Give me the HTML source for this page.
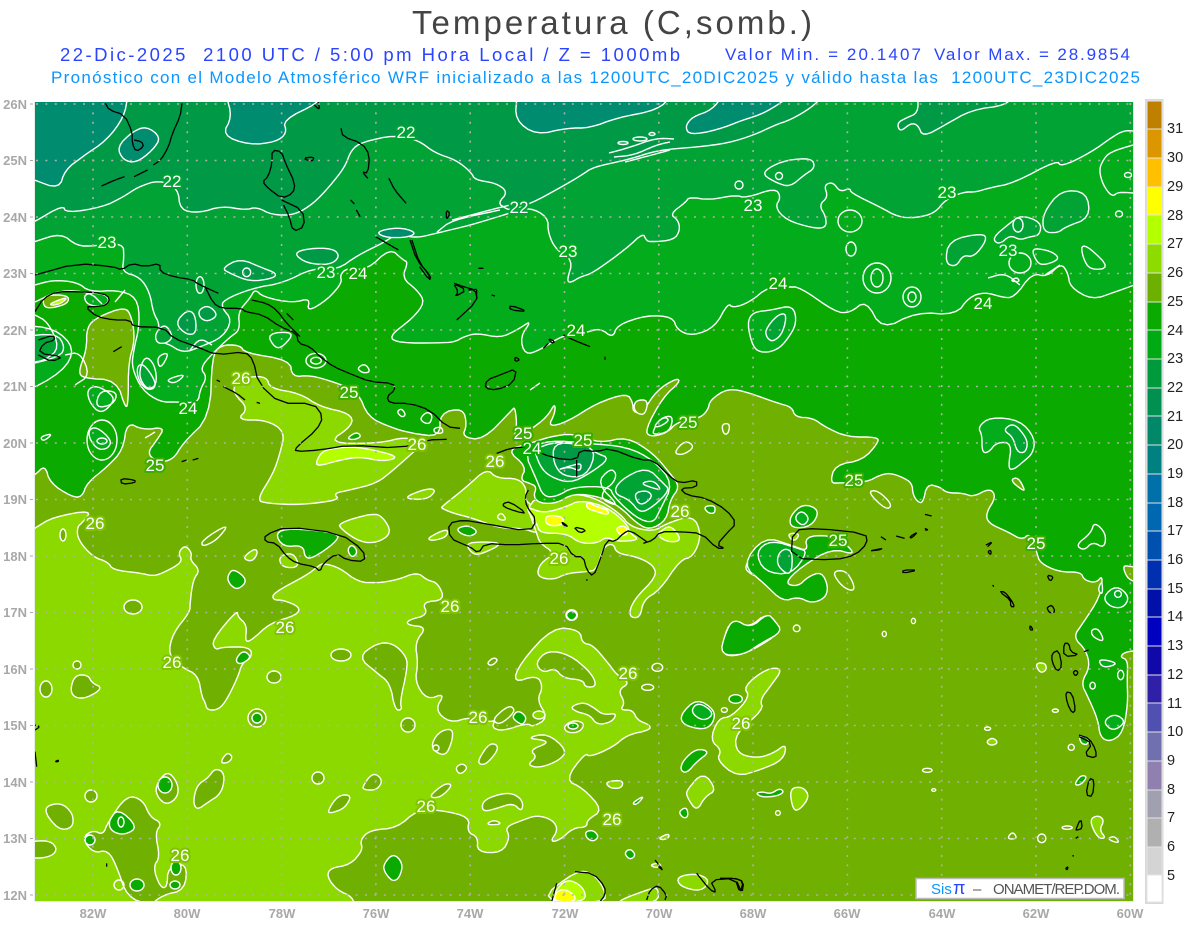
<!DOCTYPE html>
<html><head><meta charset="utf-8"><title>Temperatura</title>
<style>
html,body{margin:0;padding:0;background:#fff;width:1200px;height:927px;overflow:hidden}
svg{display:block}
text{font-family:"Liberation Sans",sans-serif}
.f path,.f polygon,.f ellipse{stroke:#fff;stroke-width:1.4;stroke-linejoin:round;vector-effect:non-scaling-stroke}
.b20{fill:#008c6e}.b21{fill:#009a46}.b22{fill:#00a334}.b23{fill:#02ac1a}.b24{fill:#0aaa00}.b25{fill:#6fb000}.b26{fill:#8cd900}.b27{fill:#b4ff00}.b28{fill:#ffff00}
.n{fill:none}
.w{fill:none;stroke:#fff;stroke-width:1.4;stroke-linejoin:round;vector-effect:non-scaling-stroke}
.k{fill:none;stroke:#000;stroke-width:1.3;stroke-linejoin:round;vector-effect:non-scaling-stroke}
.cl text{fill:#fff;font-size:17px;text-anchor:middle;paint-order:stroke;stroke-width:4px;stroke-linejoin:round}
.ax{fill:#a8a8a8;font-size:13px;font-weight:bold}
.lg{fill:#222;font-size:14.5px}
</style></head><body>
<svg width="1200" height="927" viewBox="0 0 1200 927" xmlns="http://www.w3.org/2000/svg">
<defs><clipPath id="c"><rect x="35" y="102" width="1098" height="799"/></clipPath></defs>
<rect width="1200" height="927" fill="#fff"/>

<text x="412" y="34" font-size="33" fill="#444" textLength="400" lengthAdjust="spacing">Temperatura (C,somb.)</text>
<text x="60" y="61" font-size="18.5" fill="#2a44ff" textLength="620" lengthAdjust="spacing" xml:space="preserve">22-Dic-2025  2100 UTC / 5:00 pm Hora Local / Z = 1000mb</text>
<text x="725" y="60" font-size="17" fill="#2a44ff" textLength="196" lengthAdjust="spacing">Valor Min. = 20.1407</text>
<text x="934" y="60" font-size="17" fill="#2a44ff" textLength="196" lengthAdjust="spacing">Valor Max. = 28.9854</text>
<text x="51" y="83" font-size="17" fill="#0a96ff" textLength="1089" lengthAdjust="spacing" xml:space="preserve">Pronóstico con el Modelo Atmosférico WRF inicializado a las 1200UTC_20DIC2025 y válido hasta las  1200UTC_23DIC2025</text>

<g clip-path="url(#c)">
<rect x="35" y="102" width="1098" height="799" fill="#009a46"/>
<g class="f">
<!-- teal top -->
<polygon class="b20" points="25,95 128,95 124,117 107,140 82,157 65,170 59,189 34,180 25,176"/>
<polygon class="b20" points="117,147 132,132 146,126 161,137 153,150 136,163 123,160"/>
<polygon class="b20" points="226,95 232,117 222,135 249,145 276,142 287,133 283,120 318,103 320,95"/>
<polygon class="b20" points="517,95 515,120 536,135 567,128 590,128 616,118 658,110 672,95"/>
<polygon class="b20" points="723,95 712,110 692,117 685,127 690,135 717,130 743,120 765,113 792,95"/>
<!-- 22 and up -->
<polygon class="b22" points="25,226 34,222 63,205 66,213 103,207 123,197 138,187 159,180 178,188 180,210 199,213 222,206 245,210 257,207 272,215 295,215 314,203 329,187 345,167 351,150 362,142 395,135 418,140 435,153 456,160 471,172 475,180 496,183 508,192 498,203 505,208 510,210 532,203 556,190 582,175 593,167 627,160 658,150 698,147 728,143 754,135 775,125 790,120 811,108 824,95 1140,90 1140,910 25,910"/>
<polygon class="b21" points="897,123 900,132 911,123 918,125 923,137 945,125 971,110 1007,105 1012,95 918,95 918,113 906,118"/>
<polygon class="b23" points="25,244 34,242 61,233 77,246 94,246 123,243 124,257 122,272 140,277 150,293 153,312 160,325 157,343 167,343 183,353 200,347 223,337 232,320 222,308 223,300 253,288 283,283 313,268 337,270 358,255 383,243 398,233 410,237 421,237 437,233 471,225 510,213 529,207 548,217 548,233 556,250 573,260 567,280 570,283 580,277 593,273 627,248 643,233 646,240 650,242 674,240 680,230 678,220 670,214 686,202 689,197 710,200 735,195 746,198 775,188 781,197 775,207 786,220 812,228 826,228 826,217 819,205 828,197 824,185 833,182 840,192 850,188 851,193 880,207 898,217 916,218 935,213 945,200 963,192 976,192 989,188 1014,183 1057,160 1061,167 1090,153 1115,135 1126,130 1140,132 1140,910 25,910"/>
<polygon class="b22" points="763,175 768,168 786,160 812,158 815,168 804,175 790,187 777,183"/>
<polygon class="b22" points="1043,213 1061,190 1087,192 1090,218 1065,227 1058,233 1043,232"/>
<polygon class="b22" points="945,263 949,240 983,233 987,240 974,257 963,255 956,267"/>
<polygon class="b22" points="992,238 1010,223 1021,215 1041,222 1040,235 1029,237 1020,240 1010,235 999,245"/>
<polygon class="b20" points="375,232 398,227 416,232 410,237 387,238"/>
<!-- 24 zone -->
<polygon class="b24" points="25,287 35,285 53,280 77,282 90,292 117,290 137,297 140,323 133,353 132,368 142,390 160,402 177,402 198,403 200,390 207,377 200,368 213,353 230,337 240,330 238,312 250,298 255,289 263,297 293,303 310,298 307,312 327,300 342,283 340,275 347,268 367,270 390,248 403,260 408,262 402,278 417,290 425,302 413,318 388,337 400,343 438,343 455,342 463,337 477,333 500,338 517,330 532,320 520,337 525,355 540,350 563,335 585,333 600,328 613,338 617,325 647,315 673,317 677,330 693,336 715,327 728,303 733,308 750,302 768,287 788,287 800,287 835,312 850,313 866,300 882,330 916,312 956,315 969,297 985,292 1001,297 1014,298 1032,273 1047,277 1061,263 1068,273 1070,287 1092,300 1115,292 1140,283 1140,910 25,910"/>
<polygon class="b23" points="747,323 753,312 772,310 793,305 797,323 787,340 777,350 763,353 753,348"/>
<polygon class="b22" points="765,330 777,315 787,313 783,333 773,342 767,338"/>
<polygon class="b23" points="978,427 990,417 1020,420 1035,438 1033,453 1023,462 1013,470 1008,468 1012,443 997,442 988,453 982,452 982,435"/>
<polygon class="b22" points="1003,430 1013,423 1023,433 1028,443 1025,453 1017,452 1013,437"/>
<polygon class="b25" points="1010,480 1018,477 1025,490 1022,490"/>
<!-- 25 zone -->
<polygon class="b25" points="25,480 35,475 45,465 50,483 72,497 82,497 87,483 107,467 123,450 127,422 143,430 165,427 157,440 147,453 157,462 173,460 183,443 210,417 212,357 220,345 240,345 245,353 290,360 292,377 310,375 337,383 358,392 368,417 390,427 410,433 440,437 440,413 463,408 467,425 462,437 483,440 512,410 515,407 517,427 513,440 523,433 530,430 547,417 555,403 555,413 548,427 567,422 597,403 627,393 633,403 633,412 642,413 657,390 677,378 680,382 663,397 645,430 650,437 667,433 677,422 700,418 708,410 710,400 728,388 750,393 777,403 792,407 795,417 813,418 825,427 847,437 878,437 878,443 863,460 835,465 830,483 840,483 867,482 880,475 890,473 902,477 912,483 913,495 918,502 923,503 927,484 940,487 947,493 963,493 973,497 990,488 996,497 986,513 988,523 1008,532 1022,540 1030,533 1037,553 1040,563 1059,572 1081,572 1084,580 1096,583 1103,575 1100,597 1083,623 1073,637 1086,650 1090,667 1081,683 1088,697 1098,720 1100,737 1110,742 1123,733 1128,703 1127,680 1128,660 1120,657 1125,652 1140,650 1140,910 25,910"/>
<polygon class="b25" points="1122,565 1133,567 1140,567 1140,582 1128,580"/>
<!-- West Cuba olive + blobs (zoom 6 coords) -->
<g transform="translate(0 240) scale(.33333)">
<polygon class="b25" points="375,200 395,230 405,300 385,370 385,480 378,510 350,420 250,415 235,395 260,330 260,260 295,230"/>
<polygon class="b23" points="260,450 290,435 345,470 330,500 300,520 270,490"/>
<polygon class="b23" points="265,570 290,560 335,600 325,625 295,630 270,600"/>
<polygon class="b22" points="410,380 430,370 465,420 465,445 440,450 415,420"/>
<polygon class="b23" points="495,420 560,400 525,432"/>
<polygon class="b23" points="800,280 885,275 850,320 825,325"/>
<polygon class="b23" points="120,590 160,580 130,605"/>
<polygon class="b23" points="60,255 165,265 225,325 190,395 60,465"/>
<polygon class="b22" points="60,290 170,280 195,320 180,350 60,380"/>
<polygon class="b23" points="250,160 310,160 330,180 310,200 260,195"/>
<polygon class="b21" points="525,250 560,210 585,220 590,280 560,285"/>
<polygon class="b21" points="595,210 625,195 655,225 625,245 600,235"/>
<polygon class="b21" points="665,85 720,55 790,85 830,100 820,115 750,125 690,100"/>
<polygon class="b21" points="880,40 925,25 1000,25 1020,50 990,75 920,70"/>
<polygon class="b25" points="130,165 205,165 205,190 155,205 130,200"/>
<polygon class="b27" points="150,190 205,170 185,190 155,197"/>
<polygon class="b22" points="470,310 465,280 495,250 520,290 500,310"/>
<ellipse class="n" cx="600" cy="135" rx="12" ry="25"/>
<polygon class="n" points="470,350 510,335 480,390"/>
<ellipse class="n" cx="740" cy="97" rx="12" ry="13"/>
<ellipse class="n" cx="948" cy="362" rx="30" ry="22"/>
<ellipse class="n" cx="948" cy="362" rx="16" ry="10"/>
<polygon class="n" points="1070,385 1095,370 1112,395 1090,400"/>
<polygon class="n" points="1190,515 1205,505 1218,525 1205,532"/>
<polygon class="n" points="1260,535 1280,515 1298,525 1290,552 1270,548"/>
<polygon class="n" points="1300,565 1325,560 1330,580 1305,580"/>
</g>
<!-- 26 zone -->
<polygon class="b26" points="25,535 35,528 53,517 92,510 83,522 77,527 78,540 93,557 108,562 113,570 140,573 153,576 163,573 183,562 178,553 185,545 192,553 190,560 200,570 193,580 190,603 190,612 173,633 168,655 183,668 198,675 202,697 205,702 207,710 217,710 225,703 238,677 242,663 252,657 250,647 223,647 215,650 212,640 237,610 238,617 247,625 245,642 252,640 270,623 297,615 300,607 283,600 273,600 273,593 307,575 317,567 323,563 340,568 358,582 377,583 397,580 417,572 427,580 438,583 445,600 422,602 428,615 408,620 407,625 427,627 415,642 418,663 415,682 427,700 445,693 435,710 450,723 470,717 490,722 495,720 492,728 503,731 527,723 533,727 548,718 537,700 543,687 537,675 513,683 520,663 553,627 580,630 582,643 593,645 608,663 617,675 630,683 618,690 625,703 620,710 633,710 637,720 650,725 650,730 627,735 613,747 590,757 585,753 565,780 583,788 603,810 587,820 587,827 573,828 560,840 550,842 558,830 553,820 537,815 523,820 505,827 510,837 502,853 477,852 478,837 467,832 470,817 440,810 417,810 397,828 370,830 360,840 363,850 350,865 330,868 327,877 337,890 353,897 355,910 25,910"/>
<!-- olive holes -->
<polygon class="b25" points="535,663 548,650 570,655 588,670 595,680 595,687 585,687 583,680 563,678 555,668 543,673"/>
<polygon class="b25" points="570,707 583,702 593,707 603,715 617,713 612,722 597,725 590,715 577,712"/>
<polygon class="b25" points="527,738 547,733 567,750 560,760 540,768 527,765 537,757 530,750 548,743 543,740"/>
<polygon class="b25" points="482,803 490,797 510,792 523,800 522,812 513,803 498,808 483,812"/>
<polygon class="b25" points="478,760 490,742 500,747 488,763 480,765"/>
<polygon class="b25" points="455,768 462,763 468,768 460,775"/>
<polygon class="b25" points="430,748 438,732 453,728 452,742 445,757"/>
<polygon class="b25" points="428,797 445,783 453,785 440,798"/>
<polygon class="b25" points="487,823 495,820 502,824 490,825"/>
<polygon class="b25" points="563,727 573,720 585,723 580,732 568,733"/>
<ellipse class="b24" cx="573" cy="726" rx="5" ry="3"/>
<polygon class="b25" points="492,720 505,708 512,706 515,712 500,725"/>
<polygon class="b24" points="512,717 518,710 527,717 523,725 517,722"/>
<ellipse class="b26" cx="539" cy="715" rx="6" ry="4"/>
<ellipse class="b25" cx="63" cy="535" rx="3" ry="6"/>
<polygon class="b25" points="202,540 230,523 217,540 202,547"/>
<ellipse class="b25" cx="133" cy="607" rx="9" ry="7"/>
<ellipse class="b25" cx="77" cy="665" rx="4" ry="4"/>
<ellipse class="b25" cx="46" cy="689" rx="6" ry="8"/>
<polygon class="b25" points="70,690 75,675 88,675 92,683 103,688 87,698 75,698"/>
<polygon class="b25" points="220,763 227,752 233,757 228,763"/>
<polygon class="b25" points="193,802 197,785 208,778 215,768 225,773 222,793 207,803 197,810"/>
<polygon class="b25" points="155,787 167,770 178,783 178,797 167,805 158,798"/>
<ellipse class="b24" cx="165" cy="785" rx="7" ry="8"/>
<polygon class="b25" points="42,808 60,802 73,813 73,828 58,830"/>
<polygon class="b25" points="25,842 50,840 58,850 48,858 25,858"/>
<ellipse class="b25" cx="91" cy="796" rx="6" ry="6"/>
<polygon class="b25" points="108,822 127,795 143,800 150,817 162,823 155,833 160,857 153,867 160,887 167,888 168,867 187,863 185,890 163,895 150,905 127,897 117,867 108,850 93,853 82,838 93,830 103,835"/>
<polygon class="b24" points="108,822 118,808 138,827 125,835 112,832"/>
<ellipse class="n" cx="121" cy="822" rx="3" ry="5"/>
<ellipse class="b24" cx="90" cy="840" rx="5" ry="5"/>
<ellipse class="b24" cx="137" cy="885" rx="7" ry="6"/>
<ellipse class="n" cx="119" cy="885" rx="5" ry="5"/>
<ellipse class="b24" cx="176" cy="868" rx="5" ry="7"/>
<ellipse class="b24" cx="175" cy="885" rx="5" ry="4"/>
<polygon class="b25" points="362,787 373,772 383,780 377,790 365,790"/>
<polygon class="b25" points="327,812 338,795 352,795 345,808 332,813"/>
<ellipse class="b25" cx="318" cy="778" rx="6" ry="6"/>
<polygon class="b25" points="358,657 377,643 393,643 407,657 407,670 400,702 402,710 395,710 390,683 377,673"/>
<ellipse class="b25" cx="341" cy="655" rx="10" ry="6"/>
<ellipse class="b25" cx="408" cy="725" rx="7" ry="7"/>
<polygon class="b24" points="227,577 233,568 248,580 238,590 230,585"/>
<polygon class="b24" points="235,660 243,650 252,657 240,665"/>
<ellipse class="b25" cx="257" cy="718" rx="9" ry="9"/>
<ellipse class="b24" cx="257" cy="718" rx="5" ry="5"/>
<ellipse class="b25" cx="274" cy="677" rx="7" ry="6"/>
<ellipse class="b25" cx="436" cy="748" rx="3" ry="3"/>
<polygon class="b24" points="383,865 393,853 403,863 400,877 393,882 385,873"/>
<!-- light in olive -->
<polygon class="b26" points="338,523 373,513 383,517 392,533 377,543 360,542 342,530"/>
<polygon class="b26" points="242,558 255,548 258,553 252,562"/>
<polygon class="b24" points="275,533 290,528 340,533 335,543 313,558 305,558 303,545 283,547"/>
<polygon class="b26" points="278,557 293,552 300,567 283,568"/>
<polygon class="b24" points="347,550 352,544 358,552 352,558"/>
<polygon class="b26" points="427,538 448,528 447,537 432,541"/>
<!-- East Cuba light (zoom 6 coords) -->
<g transform="translate(0 240) scale(.33333)">
<polygon class="b26" points="705,430 745,410 800,410 810,445 900,460 960,500 1050,520 1060,555 980,610 1140,610 1215,590 1270,610 1225,650 1180,690 1130,730 1050,750 1000,760 1020,780 900,795 800,790 770,780 820,700 840,640 855,575 800,540 710,540 745,505 700,460"/>
<polygon class="b27" points="950,660 970,630 1040,620 1100,625 1200,650 1150,665 1080,650 1020,660 950,680"/>
<polygon class="b26" points="1205,775 1280,745 1310,750 1280,780"/>
<polygon class="b24" points="1040,595 1070,575 1085,590 1060,600"/>
</g>
<!-- Hispaniola (zoom 4 coords) -->
<g transform="translate(440 400) scale(.33333)">
<polygon class="b26" points="5,320 75,265 140,205 170,235 235,235 260,265 255,300 275,315 260,330 285,360 300,375 285,385 290,400 250,385 180,385 100,355 40,340 5,325"/>
<polygon class="b26" points="255,300 380,280 460,290 540,340 570,380 640,395 680,370 760,345 785,405 760,470 720,480 660,570 610,600 600,655 565,650 580,600 650,530 640,495 590,470 530,460 520,430 490,440 470,510 440,515 380,520 340,540 290,530 300,490 345,460 300,430 290,400"/>
<polygon class="b26" points="75,430 130,425 190,430 130,460 100,465"/>
<polygon class="b27" points="260,320 310,340 380,320 420,300 500,320 560,370 570,400 600,420 530,425 500,410 470,430 420,430 380,400 300,400 290,370 270,345"/>
<polygon class="b27" points="660,395 690,375 720,410 715,425 680,425 650,405"/>
<polygon class="b28" points="320,345 370,350 370,375 330,378 315,365"/>
<polygon class="b28" points="440,305 470,320 505,330 505,345 470,335 440,325"/>
<polygon class="b28" points="525,385 555,375 565,400 545,410"/>
<polygon class="b24" points="240,240 260,200 200,150 270,130 330,110 400,100 480,130 560,110 640,160 690,220 720,260 690,300 680,360 630,390 590,370 540,320 480,290 400,280 350,310 300,310 280,290 290,260 270,250"/>
<polygon class="b23" points="250,150 330,120 440,130 560,140 640,180 700,250 660,330 640,370 590,355 520,290 510,260 400,260 350,290 310,290 290,240"/>
<polygon class="b22" points="280,140 400,120 470,160 510,175 450,220 390,250 330,230 300,200"/>
<polygon class="b22" points="540,240 620,200 670,250 690,270 640,320 600,340 570,300 520,280"/>
<polygon class="b21" points="340,130 410,130 470,150 440,230 370,230 340,190"/>
<polygon class="b21" points="580,280 620,270 640,290 600,320"/>
<polygon class="n" points="350,210 400,195 425,190 420,215 390,200"/>
<polygon class="n" points="470,250 510,205 530,220 520,250 490,270 485,300 540,320"/>
<polygon class="n" points="600,250 640,240 665,270 640,265"/>
<polygon class="b24" points="50,385 85,375 115,395 90,410 60,400"/>
<polygon class="b24" points="790,320 825,315 825,340 805,340"/>
<polygon class="b24" points="910,500 960,440 960,530 935,525"/>
<ellipse class="b24" cx="395" cy="645" rx="17" ry="16"/>
<polygon class="b26" points="170,350 185,337 200,360 180,360"/>
<polygon class="b25" points="580,20 590,0 625,0 615,45 590,40"/>
<polygon class="b24" points="640,90 660,55 700,45 690,95 640,105"/>
<polygon class="b23" points="640,80 670,50 690,60 660,80"/>
<polygon class="b25" points="700,160 735,120 765,140 730,165"/>
<polygon class="n" points="845,72 870,70 865,102 850,102"/>
</g>
<!-- SE patches (zoom 9 coords) -->
<g transform="translate(420 600) scale(.33333)">
<polygon class="b26" points="870,420 895,355 935,350 990,290 970,260 1040,205 1090,205 1050,260 1020,300 1030,330 945,400 950,460 1010,475 1060,460 1100,430 1090,480 1020,510 950,530 890,480 905,450"/>
<polygon class="b24" points="780,345 830,295 885,330 880,370 850,390 790,375"/>
<polygon class="b23" points="810,335 835,305 885,340 850,365"/>
<polygon class="b24" points="905,160 925,60 985,85 1045,35 1085,95 1000,150 940,170"/>
<polygon class="b24" points="780,510 790,480 830,445 870,455 830,485 800,520"/>
<polygon class="b26" points="800,570 850,515 890,570 855,590 830,635 800,590"/>
<polygon class="b24" points="775,635 800,620 805,650 790,655"/>
<polygon class="b24" points="635,610 675,585 650,615"/>
<polygon class="b24" points="612,760 630,745 648,765 630,780"/>
<polygon class="b26" points="555,545 610,540 605,565 570,565"/>
<polygon class="b26" points="715,715 745,700 748,712 730,720"/>
<polygon class="b26" points="770,830 830,820 870,840 845,875 780,860"/>
<polygon class="b26" points="690,795 715,788 725,800 705,803"/>
<polygon class="b26" points="600,900 680,870 715,860 715,910 600,910"/>
<polygon class="b26" points="350,905 470,810 520,820 555,870 555,910"/>
<polygon class="b27" points="400,880 440,835 490,860 500,905 400,905"/>
<polygon class="b28" points="405,905 405,880 430,865 465,885 465,905"/>
<polygon class="b24" points="495,695 520,690 537,710 520,725 500,715"/>
<polygon class="b24" points="435,45 455,28 475,45 455,65"/>
<polygon class="n" points="200,190 220,172 235,180 215,198"/>
<ellipse class="n" cx="712" cy="202" rx="16" ry="12"/>
<ellipse class="n" cx="683" cy="262" rx="18" ry="9"/>
<ellipse class="b24" cx="947" cy="297" rx="20" ry="13"/>
<ellipse class="n" cx="913" cy="330" rx="9" ry="7"/>
<ellipse class="n" cx="1130" cy="85" rx="10" ry="10"/>
</g>
<!-- E Antilles (zoom 10 coords) -->
<g transform="translate(720 480) scale(.33871 .33333)">
<polygon class="b24" points="65,255 130,170 210,195 260,215 250,170 320,165 370,190 400,225 330,205 240,260 190,310 230,320 260,290 300,275 320,320 310,355 270,370 230,350 185,365 130,310"/>
<polygon class="b23" points="105,215 150,180 230,205 260,215 210,285 130,275"/>
<polygon class="b22" points="170,225 190,205 215,215 210,290 170,260"/>
<polygon class="b24" points="205,110 245,70 295,90 270,140 210,145"/>
<polygon class="b23" points="218,115 240,90 265,115 245,140"/>
<polygon class="b25" points="330,275 370,270 395,310 395,335 360,320"/>
<polygon class="b26" points="200,160 235,160 225,180 210,180"/>
<polygon class="b24" points="0,525 15,460 40,415 90,445 140,400 160,420 185,455 120,490 70,525"/>
<polygon class="b23" points="1130,350 1170,315 1210,350 1190,385 1150,380"/>
<ellipse class="n" cx="1175" cy="342" rx="10" ry="10"/>
<polygon class="b23" points="1130,725 1165,700 1200,725 1160,755"/>
<polygon class="b23" points="1115,535 1180,550 1130,565"/>
<polygon class="n" points="1095,450 1115,445 1130,470 1130,485 1100,470"/>
<ellipse class="n" cx="1183" cy="585" rx="9" ry="14"/>
<ellipse class="n" cx="1100" cy="617" rx="8" ry="10"/>
<polygon class="b26" points="1090,1020 1115,1005 1135,1020 1120,1050 1140,1075 1115,1075"/>
<polygon class="b26" points="205,925 245,920 265,950 235,990 215,990"/>
<polygon class="b24" points="105,940 125,935 150,942 175,925 190,935 170,948 125,952"/>
<polygon class="n" points="1050,195 1095,160 1105,125 1140,160 1135,205 1100,185 1075,212"/>
<polygon class="n" points="435,35 465,30 510,75 490,90"/>
<ellipse class="n" cx="485" cy="462" rx="6" ry="8"/>
<ellipse class="n" cx="571" cy="423" rx="6" ry="8"/>
<polygon class="b26" points="930,550 960,548 965,570 945,580"/>
<polygon class="b24" points="1045,915 1065,885 1085,890 1065,915"/>
<polygon class="b24" points="1060,765 1090,775 1085,795 1065,790"/>
<polygon class="b26" points="785,785 805,772 822,788 800,798"/>
<ellipse class="n" cx="1037" cy="802" rx="9" ry="9"/>
<ellipse class="n" cx="790" cy="746" rx="9" ry="5"/>
<ellipse class="n" cx="990" cy="692" rx="9" ry="5"/>
<ellipse class="n" cx="612" cy="871" rx="14" ry="6"/>
<ellipse class="n" cx="631" cy="930" rx="6" ry="4"/>
<ellipse class="n" cx="171" cy="999" rx="7" ry="7"/>
<ellipse class="n" cx="950" cy="1075" rx="12" ry="13"/>
<polygon class="n" points="850,1070 865,1055 878,1075 855,1078"/>
<ellipse class="n" cx="1025" cy="1043" rx="15" ry="5"/>
<polygon class="n" points="1145,1075 1165,1068 1180,1088 1160,1085"/>
<polygon class="b23" points="1115,330 1128,300 1130,345"/>
</g>
<!-- extra contour lines -->
<g class="w" fill="none">
<path class="n" d="M609,153 631,147 656,138 674,139M614,157 634,155 656,145 670,142M625,162 652,155 670,150M452,220 490,210 510,205M437,232 452,220 500,210"/>
<ellipse class="n" cx="623" cy="143" rx="5" ry="1.5"/>
<ellipse class="n" cx="640" cy="139" rx="7" ry="2"/>
<ellipse class="n" cx="652" cy="134" rx="3" ry="1.5"/>
<ellipse class="n" cx="779" cy="176" rx="3.5" ry="3.5"/>
<ellipse class="n" cx="739" cy="185" rx="4" ry="4"/>
<ellipse class="n" cx="850" cy="221" rx="12" ry="11"/>
<ellipse class="n" cx="851" cy="249" rx="5" ry="7"/>
<ellipse class="n" cx="877" cy="278" rx="14" ry="15"/>
<ellipse class="n" cx="877" cy="278" rx="6" ry="9"/>
<ellipse class="n" cx="912" cy="297" rx="9" ry="10"/>
<ellipse class="n" cx="912" cy="297" rx="4" ry="5"/>
<path class="n" d="M1133,145 1110,152 1103,160 1099,170 1103,185 1112,197 1118,192 1133,193"/>
<ellipse class="n" cx="1128" cy="175" rx="3.5" ry="2.5"/>
<ellipse class="n" cx="1119" cy="214" rx="3.5" ry="3"/>
<ellipse class="n" cx="1018" cy="225" rx="5" ry="7"/>
<ellipse class="n" cx="1020" cy="263" rx="11" ry="10"/>
<path class="n" d="M1031,248 1047,250 1057,255 1058,260 1045,265 1037,263ZM1081,245 1090,248 1110,268 1090,270 1083,258ZM988,278 1005,273 1020,285M1045,275 1060,265"/>
<polygon class="n" points="1010,281 1017,277 1020,282"/>
<path class="n" d="M35,302 60,290 90,292 102,304M35,315 48,322 60,348 45,360 35,362M115,302 125,290M145,355 155,365 157,385 147,390 138,375ZM65,355 80,352 90,375 75,385M100,390 118,392 113,405 95,408Z"/>
<ellipse class="n" cx="102" cy="440" rx="15" ry="20"/>
<ellipse class="n" cx="102" cy="441" rx="5" ry="3"/>
<path class="n" d="M190,350 200,338 212,345M145,438 155,432M530,390 540,383"/>
</g>
</g>

<!-- coastlines -->
<g transform="scale(.38314 .33333)">
<path class="k" d="M475,310 470,350 450,400 440,440 420,480 400,495M385,510 350,530M325,530 300,540 265,558M275,310 285,330 325,345 345,395 345,430 355,455 375,440 370,425 350,420M830,305 835,330 820,315M710,450 735,455 745,490 770,550 765,580 735,595 700,565 685,545 700,530 710,490 710,450M735,600 790,630 795,680 765,695 755,650 740,615M890,385 895,410 945,430 965,465 960,520 945,515 960,535M1015,535 1030,570 1060,610M915,600 925,612M930,630 940,650M790,475 820,470 815,485 790,475M1165,630 1175,640 1165,660 1165,630M980,710 1040,750M1075,720 1095,790 1125,830 1120,840 1095,800M1185,850 1210,860 1240,870 1245,895"/>
</g>
<g transform="translate(0 240) scale(.33333)">
<path class="k" d="M105,105 230,70 340,80 365,90 395,70 435,80 480,70 480,95 520,110 580,120 590,130 655,160M615,140 640,190 665,205 725,205 735,215 790,225 840,260 890,280 895,310 930,320 960,350 1000,380 1060,405 1110,425 1180,430 1185,450 1160,470 1170,490 1230,490 1290,510 1340,560 1380,565M105,215 130,175 170,155 240,155 310,160 330,175 320,195 290,200 255,200 290,230 340,240 390,240 400,260 490,262 520,295 590,320 650,345 735,335 760,360 775,430 840,490 940,490 970,530 950,570 890,620 885,635 960,630 1050,615 1200,625 1280,600 1340,598M115,300 160,285 165,300 130,310 115,340 190,350 155,365 115,345M340,335 365,320M650,420 660,425M670,440 710,460 735,480M770,487 780,490M545,665 560,660M578,660 595,655M362,715 405,720 405,728 365,733 362,715M755,180 800,190 830,210 860,250 900,290M860,220 880,240"/>
</g>
<g transform="translate(400 240) scale(.33333)">
<path class="k" d="M30,0 50,60 85,100 90,120M160,130 200,150 165,170 175,155 160,130M230,150 230,185 170,240M205,150 230,148M330,195 385,215 330,210 330,195M345,350 360,360 345,365 345,350M350,385 340,430 290,450 255,445 260,420 300,405 350,385M445,295 465,305 455,310 445,295M490,285 520,300 570,320M430,325 445,310M615,350 615,360M235,85 250,85M275,165 285,168"/>
</g>
<g transform="translate(440 400) scale(.33333)">
<path class="k" d="M170,160 210,145 260,140 340,175 410,180 420,150 470,155 510,145 600,180 640,180 690,230 720,250 770,240 770,262 720,265 740,285 800,295 860,330 890,370 860,400 830,435 855,445 830,445 785,400 720,395 660,395 640,420 610,430M620,425 570,390 550,400 525,425 500,420 480,480 460,530 440,510 430,470 400,470 375,430 300,430 215,435 135,430 115,460 90,440 75,435 30,415 25,370 70,360 130,370 270,395 290,360 260,320 255,290 265,270M190,310 210,305 260,340 230,335 190,320 190,310M365,365 385,380 370,375 365,365M400,380 440,390 420,400 400,380M438,540 443,540M410,180 410,230"/>
</g>
<g transform="translate(30 500) scale(.33333)">
<path class="k" d="M705,105 770,80 930,100 1000,150 1005,185 950,180 920,160 880,190 870,215 855,200 800,190 770,170 740,130 705,125 705,105M15,675 30,680 15,690M15,755 20,800M75,785 85,780 85,785 75,785M230,1090 230,1100"/>
</g>
<g transform="translate(720 480) scale(.33871 .33333)">
<path class="k" d="M215,150 290,145 430,160 435,190 400,225 340,240 210,235 215,150M475,170 490,180M520,168 545,175M560,170 585,155 565,175 560,170M605,145 615,150 605,150M605,103 625,108M440,213 480,205 470,210 440,213M540,270 585,270 540,280 540,270M785,195 805,185 790,200M790,215 800,210 800,225 790,215M825,335 840,335 860,360 870,380 858,380 858,360 825,335M965,285 985,290 975,305 965,285M970,380 980,375 990,395 975,400 965,385 970,380M915,435 925,450 915,450 915,435M1015,490 1030,490 1035,515 1060,525 1015,530 1015,490M980,520 1000,510 1010,560 995,575 980,545 980,520M1042,578 1050,570 1058,578 1050,588 1042,578M1020,635 1040,640 1050,690 1040,700 1025,670 1020,635M1060,765 1090,775 1110,810 1110,835 1075,825 1100,790 1060,770M1080,945 1090,895 1105,900 1100,950 1080,945M1050,1050 1065,1015 1070,1045 1055,1050 1050,1050M1050,1075 1058,1070M1042,1125 1043,1130M1020,1165 1028,1160 1025,1170 1020,1165M0,1195 45,1195 70,1205 65,1240 50,1205M805,315 808,320M1075,515 1088,510"/>
</g>
<g transform="translate(420 600) scale(.33333)">
<path class="k" d="M680,900 690,870 715,855 740,885 735,900M830,820 870,870 890,878 870,840 945,835 960,880 970,845 945,835M705,780 730,812 715,800M465,815 520,820 555,860 555,885 540,905M410,850 395,905"/>
</g>

<!-- grid -->
<g stroke="#b2b0a8" stroke-width="1.6" stroke-dasharray="2 7.4" fill="none">
<path d="M93,103V901M187.3,103V901M281.6,103V901M375.9,103V901M470.2,103V901M564.5,103V901M658.8,103V901M753.1,103V901M847.4,103V901M941.7,103V901M1036,103V901M1130.3,103V901"/>
<path d="M36,104H1133M36,160.5H1133M36,217H1133M36,273.5H1133M36,330H1133M36,386.5H1133M36,443H1133M36,499.5H1133M36,556H1133M36,612.5H1133M36,669H1133M36,725.5H1133M36,782H1133M36,838.5H1133M36,895H1133"/>
</g>

<!-- contour labels -->
<g class="cl">
<g stroke="#00a334"><text x="406" y="138">22</text><text x="172" y="187">22</text><text x="519" y="213">22</text></g>
<g stroke="#02ac1a"><text x="107" y="248">23</text><text x="326" y="278">23</text><text x="568" y="257">23</text><text x="753" y="211">23</text><text x="947" y="198">23</text><text x="1008" y="256">23</text></g>
<g stroke="#0aaa00"><text x="358" y="279">24</text><text x="778" y="289">24</text><text x="576" y="336">24</text><text x="983" y="309">24</text><text x="188" y="414">24</text><text x="532" y="454">24</text></g>
<g stroke="#3cad00"><text x="349" y="398">25</text><text x="155" y="471">25</text><text x="523" y="439">25</text><text x="583" y="446">25</text><text x="688" y="428">25</text><text x="854" y="486">25</text><text x="838" y="546">25</text><text x="1036" y="549">25</text></g>
<g stroke="#7ec400"><text x="241" y="384">26</text><text x="417" y="450">26</text><text x="95" y="529">26</text><text x="495" y="467">26</text><text x="680" y="517">26</text><text x="559" y="564">26</text><text x="450" y="612">26</text><text x="285" y="633">26</text><text x="172" y="668">26</text><text x="628" y="679">26</text><text x="478" y="723">26</text><text x="741" y="729">26</text><text x="426" y="812">26</text><text x="612" y="825">26</text><text x="180" y="861">26</text></g>
</g>
</g>

<!-- plot border -->
<path d="M34.5,102V901.5H1133.5V102" fill="none" stroke="#e6efe6" stroke-width="1"/>

<!-- logo box -->
<rect x="916" y="878.500" width="208" height="20" fill="#fff" stroke="#bbb" stroke-width="1.500"/>
<text x="931" y="894" font-size="15" fill="#0a96ff">Sis</text>
<text x="953" y="894" font-size="18" fill="#2a44ff">π</text>
<text x="973" y="894" font-size="15" fill="#555">–</text>
<text x="993" y="894" font-size="15" fill="#555" textLength="127" lengthAdjust="spacing">ONAMET/REP.DOM.</text>

<!-- axes -->
<g class="ax" text-anchor="end">
<text x="27" y="109">26N</text><text x="27" y="165">25N</text><text x="27" y="222">24N</text><text x="27" y="278">23N</text><text x="27" y="335">22N</text><text x="27" y="391">21N</text><text x="27" y="448">20N</text><text x="27" y="504">19N</text><text x="27" y="561">18N</text><text x="27" y="617">17N</text><text x="27" y="674">16N</text><text x="27" y="730">15N</text><text x="27" y="787">14N</text><text x="27" y="843">13N</text><text x="27" y="900">12N</text>
</g>
<g stroke="#a8a8a8"><path d="M30,104H33M30,160.500H33M30,217H33M30,273.500H33M30,330H33M30,386.500H33M30,443H33M30,499.500H33M30,556H33M30,612.500H33M30,669H33M30,725.500H33M30,782H33M30,838.500H33M30,895H33"/></g>
<g class="ax" text-anchor="middle">
<text x="93" y="918">82W</text><text x="187" y="918">80W</text><text x="282" y="918">78W</text><text x="376" y="918">76W</text><text x="470" y="918">74W</text><text x="565" y="918">72W</text><text x="659" y="918">70W</text><text x="753" y="918">68W</text><text x="847" y="918">66W</text><text x="942" y="918">64W</text><text x="1036" y="918">62W</text><text x="1130" y="918">60W</text>
</g>

<!-- legend -->
<rect x="1145" y="99" width="18.500" height="805" fill="#d8d8d8"/>
<g stroke="#e4e4e4" stroke-width="1">
<rect x="1147" y="101" width="15" height="28" fill="#bf8000"/>
<rect x="1147" y="129" width="15" height="29" fill="#dc9600"/>
<rect x="1147" y="158" width="15" height="29" fill="#ffc000"/>
<rect x="1147" y="187" width="15" height="28" fill="#ffff00"/>
<rect x="1147" y="215" width="15" height="29" fill="#b4ff00"/>
<rect x="1147" y="244" width="15" height="29" fill="#8edb00"/>
<rect x="1147" y="273" width="15" height="29" fill="#6eb000"/>
<rect x="1147" y="302" width="15" height="28" fill="#0aaa00"/>
<rect x="1147" y="330" width="15" height="29" fill="#00aa14"/>
<rect x="1147" y="359" width="15" height="29" fill="#009a3c"/>
<rect x="1147" y="388" width="15" height="28" fill="#009050"/>
<rect x="1147" y="416" width="15" height="29" fill="#008868"/>
<rect x="1147" y="445" width="15" height="29" fill="#008080"/>
<rect x="1147" y="474" width="15" height="29" fill="#0070a8"/>
<rect x="1147" y="503" width="15" height="28" fill="#0068b0"/>
<rect x="1147" y="531" width="15" height="29" fill="#0050b0"/>
<rect x="1147" y="560" width="15" height="29" fill="#0030b0"/>
<rect x="1147" y="589" width="15" height="28" fill="#0010a8"/>
<rect x="1147" y="617" width="15" height="29" fill="#0000c0"/>
<rect x="1147" y="646" width="15" height="29" fill="#1008a8"/>
<rect x="1147" y="675" width="15" height="28" fill="#3020a8"/>
<rect x="1147" y="703" width="15" height="29" fill="#5050b0"/>
<rect x="1147" y="732" width="15" height="29" fill="#7070b0"/>
<rect x="1147" y="761" width="15" height="29" fill="#9080b0"/>
<rect x="1147" y="790" width="15" height="28" fill="#a0a0b0"/>
<rect x="1147" y="818" width="15" height="29" fill="#b0b0b0"/>
<rect x="1147" y="847" width="15" height="28" fill="#d4d4d4"/>
<rect x="1147" y="875" width="15" height="27" fill="#ffffff"/>
</g>
<g class="lg">
<text x="1167" y="133">31</text><text x="1167" y="162">30</text><text x="1167" y="191">29</text><text x="1167" y="220">28</text><text x="1167" y="248">27</text><text x="1167" y="277">26</text><text x="1167" y="306">25</text><text x="1167" y="335">24</text><text x="1167" y="363">23</text><text x="1167" y="392">22</text><text x="1167" y="421">21</text><text x="1167" y="449">20</text><text x="1167" y="478">19</text><text x="1167" y="507">18</text><text x="1167" y="535">17</text><text x="1167" y="564">16</text><text x="1167" y="593">15</text><text x="1167" y="621">14</text><text x="1167" y="650">13</text><text x="1167" y="679">12</text><text x="1167" y="708">11</text><text x="1167" y="736">10</text><text x="1167" y="765">9</text><text x="1167" y="794">8</text><text x="1167" y="822">7</text><text x="1167" y="851">6</text><text x="1167" y="880">5</text>
</g>
</svg>
<script>
(function(){
function ch(p,closed,it){
  for(var t=0;t<it;t++){
    var q=[],n=p.length,m=closed?n:n-1;
    if(!closed)q.push(p[0]);
    for(var i=0;i<m;i++){
      var a=p[i],b=p[(i+1)%n];
      q.push([a[0]*.75+b[0]*.25,a[1]*.75+b[1]*.25]);
      q.push([a[0]*.25+b[0]*.75,a[1]*.25+b[1]*.75]);
    }
    if(!closed)q.push(p[n-1]);
    p=q;
  }
  return p;
}
function parse(s){
  var v=s.match(/-?[\d.]+/g)||[],p=[];
  for(var i=0;i+1<v.length;i+=2)p.push([+v[i],+v[i+1]]);
  return p;
}
function pin(p){
  var o=[];
  p.forEach(function(a){
    o.push(a);
    if(a[0]>=1140||a[0]<=25||a[1]>=905||a[1]<=95){o.push(a);o.push(a);o.push(a);}
  });
  return o;
}
function fmt(p){return p.map(function(a){return a[0].toFixed(1)+','+a[1].toFixed(1)}).join(' ');}
document.querySelectorAll('polygon').forEach(function(e){
  var p=parse(e.getAttribute('points'));
  if(e.parentNode.classList.contains('f'))p=pin(p);
  e.setAttribute('points',fmt(ch(p,true,2)));
});
document.querySelectorAll('path.k,.w path').forEach(function(e){
  var it=e.classList.contains('k')?1:2,out='';
  e.getAttribute('d').split('M').forEach(function(s){
    if(!s.trim())return;
    var p=parse(s),c=/Z/.test(s)||(p.length>2&&p[0][0]==p[p.length-1][0]&&p[0][1]==p[p.length-1][1]);
    if(c&&p[0][0]==p[p.length-1][0]&&p[0][1]==p[p.length-1][1])p.pop();
    out+='M'+fmt(ch(p,c,it))+(c?'Z':'');
  });
  e.setAttribute('d',out);
});
})();
</script>
</body></html>
